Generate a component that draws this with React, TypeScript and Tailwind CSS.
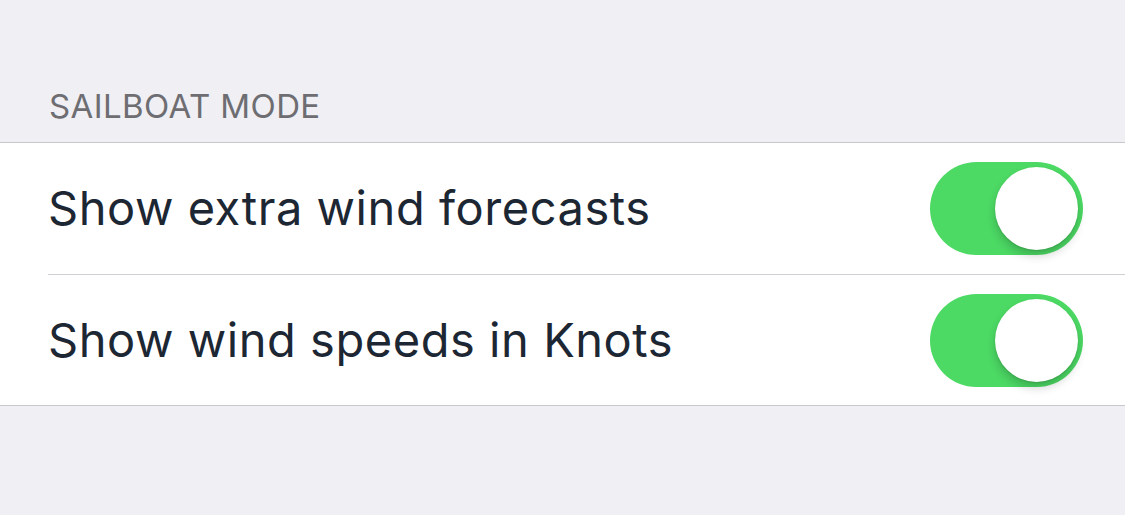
import React, { useState } from "react";

const Toggle = ({ on, onChange }: { on: boolean; onChange: () => void }) => (
  <button
    type="button"
    onClick={onChange}
    className={`relative w-[153px] h-[93px] rounded-full transition-colors ${on ? "bg-[#4cd964]" : "bg-[#e5e5ea]"}`}
  >
    <span
      className={`absolute top-[5px] w-[83px] h-[83px] rounded-full bg-white shadow-[0_6px_10px_rgba(0,0,0,0.18),0_1px_2px_rgba(0,0,0,0.12)] ${on ? "left-[65px]" : "left-[5px]"}`}
    />
  </button>
);

export default function App() {
  const [extra, setExtra] = useState(true);
  const [knots, setKnots] = useState(true);

  const rows = [
    { label: "Show extra wind forecasts", on: extra, toggle: () => setExtra((v) => !v) },
    { label: "Show wind speeds in Knots", on: knots, toggle: () => setKnots((v) => !v) },
  ];

  return (
    <div className="w-[1125px] h-[515px] bg-[#efeff4] font-['Inter',sans-serif] overflow-hidden">
      <div className="pt-[87px] pb-[17px] pl-[49px] text-[33px] leading-[38px] tracking-[0.4px] text-[#6d6d72]">
        SAILBOAT MODE
      </div>
      <div className="bg-white border-y border-[#c8c7cc]">
        {rows.map((r, i) => (
          <div key={r.label} className="pl-[48px]">
            <div className={`flex items-center justify-between h-[131px] pr-[42px] ${i > 0 ? "border-t border-[#d0d0d4]" : ""}`}>
              <span className="text-[47px] text-[#1c2733] tracking-[0.55px]">{r.label}</span>
              <Toggle on={r.on} onChange={r.toggle} />
            </div>
          </div>
        ))}
      </div>
    </div>
  );
}
